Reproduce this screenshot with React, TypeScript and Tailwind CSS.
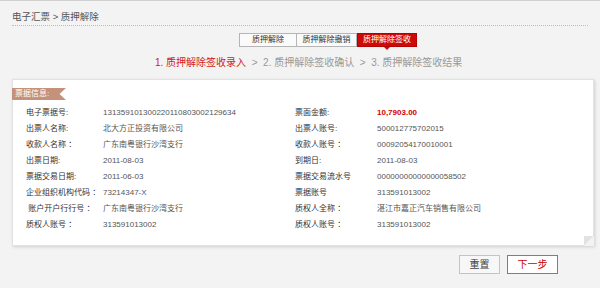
import React from 'react';

const rows: [string, string, string, string][] = [
  ['电子票据号:', '13135910130022011080300212 9634'.replace(' ', ''), '票面金额:', '10,7903.00'],
  ['出票人名称:', '北大方正投资有限公司', '出票人账号:', '500012775702015'],
  ['收款人名称 ：', '广东南粤银行沙湾支行', '收款人账号 ：', '00092054170010001'],
  ['出票日期:', '2011-08-03', '到期日:', '2011-08-03'],
  ['票据交易日期:', '2011-06-03', '票据交易流水号', '00000000000000058502'],
  ['企业组织机构代码 ：', '73214347-X', '票据账号', '313591013002'],
  [' 账户开户行行号 ：', '广东南粤银行沙湾支行', '质权人全称 ：', '湛江市嘉正汽车销售有限公司'],
  ['质权人账号 ：', '313591013002', '质权人账号 ：', '313591013002'],
];

const tabs = ['质押解除', '质押解除撤销', '质押解除签收'];

const App: React.FC = () => {
  return (
    <div className="w-[600px] h-[288px] overflow-hidden bg-[#f3f3f3] border-t border-[#cfcfcf] font-['Liberation_Sans','Noto_Sans_CJK_SC',sans-serif]">
      {/* breadcrumb */}
      <div className="mx-3 pt-[10px] pb-[2px] border-b border-dotted border-[#bdbdbd] text-[9.5px] leading-[12px] text-[#555]">
        电子汇票 &gt; 质押解除
      </div>

      {/* tabs */}
      <div className="flex pl-[239px] mt-[7px]">
        {tabs.map((t, i) =>
          i === 2 ? (
            <div key={t} className="relative w-[60px] h-[14px] bg-[#cc0a0a] border border-[#b80000] text-white text-[8px] leading-[12px] text-center">
              {t}
              <span className="absolute left-1/2 -translate-x-1/2 top-[13px] w-0 h-0 border-l-[3px] border-r-[3px] border-t-[3px] border-l-transparent border-r-transparent border-t-[#cc0a0a]" />
            </div>
          ) : (
            <div
              key={t}
              className={`h-[14px] bg-[#fafafa] border border-[#b5b5b5] text-[#333] text-[8px] leading-[12px] text-center ${i === 0 ? 'w-[58px]' : 'w-[60px] border-l-0'}`}
            >
              {t}
            </div>
          )
        )}
      </div>

      {/* steps */}
      <div className="flex pl-[155px] mt-[10px] text-[10px] leading-[12px] text-[#999] whitespace-pre">
        <span className="text-[#d41a1a]">1. 质押解除签收录入</span>
        <span>{'  >  2. 质押解除签收确认  >  3. 质押解除签收结果'}</span>
      </div>

      {/* card */}
      <div className="relative ml-3 mt-[10px] w-[582px] h-[167px] bg-white border border-[#e2e2e2] shadow-[1px_1px_3px_rgba(0,0,0,0.15)] pt-[8px]">
        <div className="w-[54px] h-[12px] -ml-px bg-[#c4917a] text-white text-[8px] leading-[12px] pl-[3px] [clip-path:polygon(0_0,100%_0,88%_50%,100%_100%,0_100%)]">
          票据信息:
        </div>
        <div className="mt-[5px] pl-[13px] grid grid-cols-[77px_192px_82px_1fr] text-[8px] leading-[16px]">
          {rows.map(([l1, v1, l2, v2]) => (
            <React.Fragment key={l1 + v1 + l2}>
              <div className="text-[#333] whitespace-pre">{l1}</div>
              <div className="text-[#555]">{v1}</div>
              <div className="text-[#333]">{l2}</div>
              <div className={l2 === '票面金额:' ? 'text-[#d40000] font-bold' : 'text-[#555]'}>{v2}</div>
            </React.Fragment>
          ))}
        </div>
        <div className="absolute right-[-1px] bottom-[-1px] w-[10px] h-[10px] bg-[linear-gradient(to_bottom_right,#e2e2e2_50%,#f3f3f3_50%)]" />
      </div>

      {/* buttons */}
      <div className="flex justify-end gap-[7px] mt-[9px] pr-[42px]">
        <button className="w-[41px] h-[19px] bg-[#f7f7f7] border border-[#c4c4c4] text-[10px] leading-[17px] text-[#444]">
          重置
        </button>
        <button className="w-[51px] h-[19px] bg-white border border-[#d45a5a] text-[10px] leading-[17px] text-[#c80000]">
          下一步
        </button>
      </div>
    </div>
  );
};

export default App;
